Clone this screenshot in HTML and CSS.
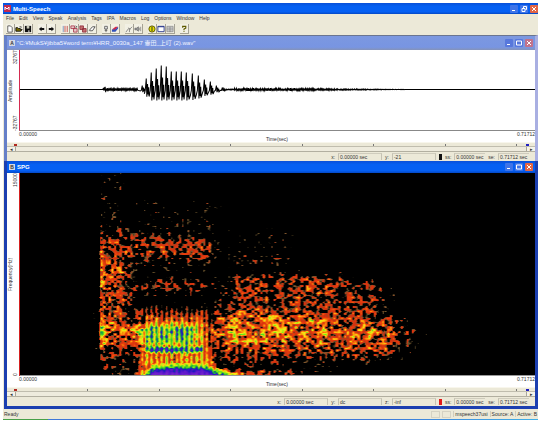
FILE: index.html
```html
<!DOCTYPE html>
<html lang="en">
<head>
<meta charset="utf-8">
<title>Multi-Speech</title>
<link rel="stylesheet" href="styles.css">
</head>
<body>
<div class="app">
  <header class="titlebar main-title">
    <svg class="app-icon" viewBox="0 0 7 7"><rect width="7" height="7" fill="#c22a50"/><path d="M1 5V2l2 2 2-2v3" fill="none" stroke="#fff"/></svg>
    <h1 class="title">Multi-Speech</h1>
    <div class="win-buttons">
      <button aria-label="Minimize"><svg viewBox="0 0 8 8"><path d="M2 5.500h3" /></svg></button>
      <button aria-label="Restore"><svg viewBox="0 0 8 8"><path d="M2 3.500h3v3H2zM3.500 3V1.500h3v3H5.500"/></svg></button>
      <button class="close" aria-label="Close"><svg viewBox="0 0 8 8"><path d="M2 2l4 4M6 2L2 6"/></svg></button>
    </div>
  </header>
  <nav class="menu">
    <a href="#">File</a><a href="#">Edit</a><a href="#">View</a><a href="#">Speak</a><a href="#">Analysis</a><a href="#">Tags</a><a href="#">IPA</a><a href="#">Macros</a><a href="#">Log</a><a href="#">Options</a><a href="#">Window</a><a href="#">Help</a>
  </nav>
  <div class="toolbar">
    <div class="group">
      <button aria-label="New"><svg viewBox="0 0 9 9"><path d="M2 1h3l2 2v5H2z" fill="#fff" stroke="#333" stroke-width=".8"/></svg></button>
      <button aria-label="Open"><svg viewBox="0 0 9 9"><path d="M1 7V3h2l1 1h2v1h2L6.500 7z" fill="#776b00" stroke="#111"/><path d="M5 2h2v1" fill="none" stroke="#111" stroke-width=".7"/></svg></button>
      <button aria-label="Save"><svg viewBox="0 0 9 9"><path d="M1 1h7v7H1z" fill="#111"/><path d="M3 1h3v3H3z" fill="#c8c8b8"/><path d="M5 6h1v2H5z" fill="#fff"/></svg></button>
    </div>
    <div class="group">
      <button aria-label="Back"><svg viewBox="0 0 9 9"><path d="M1 4.500L4 2v1.500h3v2H4V7z" fill="#111"/></svg></button>
      <button aria-label="Forward"><svg viewBox="0 0 9 9"><path d="M8 4.500L5 2v1.500H2v2h3V7z" fill="#111"/></svg></button>
    </div>
    <div class="group">
      <button aria-label="Tile"><svg viewBox="0 0 9 9"><path d="M2.500 1v7" stroke="#7892c0"/><path d="M4.500 1v7M7 1v7" stroke="#c44b48"/></svg></button>
      <button aria-label="Copy window"><svg viewBox="0 0 9 9"><path d="M1 1h4v3H1zM4 4h4v4H4z" fill="#e8c8c8" stroke="#a33044" stroke-width=".9"/><path d="M6 1l2 1-2 1" fill="none" stroke="#333" stroke-width=".7"/></svg></button>
      <button aria-label="Link windows"><svg viewBox="0 0 9 9"><path d="M1 1h4v4H1zM4 4h4v4H4z" fill="#c47070" stroke="#8b2634" stroke-width=".9"/></svg></button>
      <button aria-label="Clear"><svg viewBox="0 0 9 9"><path d="M1.500 6L5 2h3L5 6.500H2z" fill="#fff" stroke="#222" stroke-width=".8"/></svg></button>
    </div>
    <div class="group">
      <button aria-label="Record"><svg viewBox="0 0 9 9"><path d="M3 1.500h3v3H3zM4.500 4.500V8M3 6h3" fill="#eee" stroke="#444" stroke-width=".8"/></svg></button>
      <button aria-label="Erase"><svg viewBox="0 0 9 9"><path d="M1 5l4-3h3L5 6z" fill="#d12d4b"/><path d="M1 5h4l3-3v2L5 7.500H1z" fill="#3050b8"/></svg></button>
    </div>
    <div class="group">
      <button aria-label="Pencil"><svg viewBox="0 0 9 9"><path d="M1 8l3-4 1 1 3-3M4 3l2 2M5 5v3" fill="none" stroke="#666" stroke-width=".8"/></svg></button>
      <button aria-label="Play"><svg viewBox="0 0 9 9"><path d="M1 3.500h2L5 2v5L3 5.500H1zM6 3v3M7.500 2v5" fill="#999" stroke="#666" stroke-width=".7"/></svg></button>
    </div>
    <div class="group">
      <button aria-label="Information"><svg viewBox="0 0 9 9"><circle cx="4.500" cy="4.500" r="3.500" fill="#e5df00" stroke="#555000"/><path d="M4.500 2v5" stroke="#222"/></svg></button>
      <button aria-label="View"><svg viewBox="0 0 9 9"><path d="M1 1.500h7v6H1z" fill="#fff" stroke="#26358a"/><path d="M1 2h7" stroke="#26358a"/></svg></button>
      <button aria-label="Grid"><svg viewBox="0 0 9 9"><path d="M1 1.500h7v6H1zM1 3.500h7M1 5.500h7M4.500 2v6" fill="#ddd" stroke="#777" stroke-width=".7"/></svg></button>
    </div>
    <div class="group">
      <button aria-label="Help"><svg viewBox="0 0 9 9"><path d="M3 3V1.500h3.500v2l-2 1V6M4.500 7v1" fill="none" stroke="#5e5a00" stroke-width="1.300"/></svg></button>
    </div>
  </div>

  <main class="workspace">
    <section class="child inactive">
      <header class="titlebar">
        <span class="tag">A</span>
        <h2 class="title path">"C:¥MukS¥jibba5¥word term¥HRR_0030a_147 壷田_上叮 (2).wav"</h2>
        <div class="win-buttons">
          <button aria-label="Minimize"><svg viewBox="0 0 8 8"><path d="M2 5.500h3"/></svg></button>
          <button aria-label="Maximize"><svg viewBox="0 0 8 8"><path d="M1.500 2h5v4h-5z"/></svg></button>
          <button class="close" aria-label="Close"><svg viewBox="0 0 8 8"><path d="M2 2l4 4M6 2L2 6"/></svg></button>
        </div>
      </header>
      <div class="chart">
        <div class="axis-name">Amplitude</div>
        <div class="scale"><span>32767</span><span>-32767</span></div>
        <svg class="wave" viewBox="0 0 514 80" preserveAspectRatio="none"><path id="wave"/></svg>
        <div class="time"><span>0.00000</span><span class="unit">Time(sec)</span><span>0.71712</span></div>
      </div>
      <div class="ruler"><div class="ticks"><i class="start"></i><i></i><i></i><i></i><i></i><i></i><i></i><i></i></div><i class="end"></i></div>
      <div class="scroll"><button aria-label="Scroll left">◂</button><span class="thumb"></span><button aria-label="Scroll right">▸</button></div>
      <div class="readout">
        <span>x:</span><output class="wide">0.00000 sec</output><span>y:</span><output class="wide">-21</output>
        <b class="marker"></b><span>ss:</span><output>0.00000 sec</output><span>se:</span><output>0.71712 sec</output>
      </div>
    </section>

    <section class="child active">
      <header class="titlebar">
        <span class="tag">B</span>
        <h2 class="title">SPG</h2>
        <div class="win-buttons">
          <button aria-label="Minimize"><svg viewBox="0 0 8 8"><path d="M2 5.500h3"/></svg></button>
          <button aria-label="Maximize"><svg viewBox="0 0 8 8"><path d="M1.500 2h5v4h-5z"/></svg></button>
          <button class="close" aria-label="Close"><svg viewBox="0 0 8 8"><path d="M2 2l4 4M6 2L2 6"/></svg></button>
        </div>
      </header>
      <div class="chart">
        <div class="axis-name">Frequency(Hz)</div>
        <div class="scale"><span>15000</span><span>0</span></div>
        <canvas id="spg" class="spectrogram" width="514" height="203"></canvas>
        <div class="time"><span>0.00000</span><span class="unit">Time(sec)</span><span>0.71712</span></div>
      </div>
      <div class="ruler"><div class="ticks"><i class="start"></i><i></i><i></i><i></i><i></i><i></i><i></i><i></i></div><i class="end"></i></div>
      <div class="scroll"><button aria-label="Scroll left">◂</button><span class="thumb"></span><button aria-label="Scroll right">▸</button></div>
      <div class="readout">
        <span>x:</span><output class="wide">0.00000 sec</output><span>y:</span><output class="wide">dc</output><span>z:</span><output class="wide">-inf</output>
        <b class="marker red"></b><span>ss:</span><output>0.00000 sec</output><span>se:</span><output>0.71712 sec</output>
      </div>
    </section>
  </main>

  <footer class="statusbar"><span class="ready">Ready</span><span class="cell"></span><span class="cell"></span><span>mspeech37usi</span><span>Source: A</span><span>Active: B</span></footer>
  <div class="taskbar"></div>
</div>
<script src="script.js"></script>
</body>
</html>
```
FILE: styles.css
```css
* { box-sizing: border-box; }
body { margin: 0; background: #fff; color: #333; font: 5px/6px "Liberation Sans", "Noto Sans CJK JP", sans-serif; }
.app { margin: 3px 1px 0 3px; background: #ece9d8; }
h1, h2 { margin: 0; }
button { padding: 0; border: 0; font: inherit; }
svg, canvas { display: block; }

.titlebar { display: flex; align-items: center; gap: 2px; height: 12px; padding: 0 2px; background: linear-gradient(#0a50d8, #0560f2 30%, #0560f4 80%, #0548c4); color: #fff; }
.main-title { height: 11px; padding: 0 0 0 1px; }
.app-icon { width: 7px; height: 7px; }
.title { flex: 1; font-size: 6px; line-height: 8px; font-weight: bold; white-space: nowrap; }
.path { font-weight: normal; }
.win-buttons { display: flex; gap: 2px; }
.win-buttons button { width: 8px; height: 8px; border-radius: 1px; background: #3f74e8; }
.win-buttons .close { background: #e26545; }
.win-buttons path { fill: none; stroke: #fff; stroke-width: 1; }

.menu { display: flex; gap: 5px; height: 9px; padding: 1px 3px; }
.menu a { color: #333; text-decoration: none; }
.toolbar { display: flex; gap: 5px; height: 12px; padding: 1px 3px; }
.group { display: flex; }
.toolbar button { width: 9px; height: 10px; background: #f2f0e4; border-right: 1px solid #a5a294; border-bottom: 1px solid #a5a294; }
.toolbar svg { width: 8px; height: 8px; }

.workspace { padding-left: 1px; }
.child { border: solid #1c3fb0; border-width: 0 3px 3px; background: #ece9d8; }
.inactive { border: solid #a9afe2; border-width: 1px 3px 0; border-top-color: #6a7590; border-left-color: #6680c8; }
.inactive .titlebar { height: 14px; background: linear-gradient(#7c98e0, #7895e2 80%, #8593b8); color: #f0f4ff; }
.inactive .win-buttons button { background: #5878dc; }
.inactive .win-buttons .close { background: #c2728a; }
.tag { width: 6px; height: 6px; background: #d5d8e4; color: #333; text-align: center; font-weight: bold; }

.chart { display: grid; grid-template-columns: 5px 7px 1fr; background: #fff; }
.axis-name, .scale { writing-mode: vertical-rl; transform: rotate(180deg); line-height: 6px; }
.axis-name { text-align: center; }
.scale { display: flex; flex-direction: row-reverse; justify-content: space-between; }
.wave { width: 100%; height: 81px; border-left: 1px solid #d42a50; border-bottom: 1px solid #888; }
.wave path { fill: none; stroke: #000; stroke-width: 1; }
.spectrogram { width: 100%; height: 203px; background: #000; border-left: 1px solid #d42020; }
.time { grid-column: 3; display: grid; grid-template-columns: 1fr auto 1fr; height: 11px; }
.time :last-child { text-align: right; }
.time .unit { padding-top: 5px; }

.ruler { display: flex; gap: 9px; height: 5px; padding: 1px 6px 0 7px; border-top: 1px solid #f8f6ec; border-bottom: 1px solid #c0bdae; }
.ticks { flex: 1; display: flex; justify-content: space-between; }
.ruler i { width: 1px; height: 2px; background: #777; }
.ruler .start { width: 3px; background: #b02820; }
.ruler .end { width: 3px; background: #2020c0; }
.scroll { display: flex; height: 5px; border-bottom: 1px solid #b2afa0; }
.scroll button { width: 8px; background: #f5f3e9; line-height: 4px; overflow: hidden; color: #333; }
.scroll .thumb { flex: 1; border: solid #aaa798; border-width: 0 1px; background: #eeebdd; }
.readout { display: flex; justify-content: flex-end; align-items: center; gap: 3px; height: 9px; padding-right: 6px; }
.readout output { min-width: 31px; border-left: 1px solid #c5c2b3; border-top: 1px solid #cfccbd; padding-left: 1px; }
.readout .wide { width: 44px; border-right: 1px solid #c5c2b3; }
.marker { width: 3px; height: 6px; background: #111; }
.marker.red { background: #e01818; }

.statusbar { display: flex; align-items: center; gap: 2px; height: 10px; padding: 1px; }
.statusbar span { border-left: 1px solid #cfccbd; padding-left: 1px; }
.statusbar .ready { flex: 1; border: 0; padding: 0; }
.statusbar .cell { width: 9px; height: 7px; border: 1px solid #d5d2c3; }
.taskbar { height: 1px; background: linear-gradient(90deg, #48a048 45px, #3f78d8 45px, #3f78d8 70%, #40b0e8); }
```
FILE: script.js
```js
// Repeatable random numbers, so that the plots look the same on each load.
function rand(x, y) {
  let h = Math.imul(x, 374761393) + Math.imul(y, 668265263);
  h = Math.imul(h ^ (h >>> 13), 1274126177);
  return ((h ^ (h >>> 16)) >>> 0) / 4294967295;
}
function smooth(t) { return t * t * (3 - 2 * t); }
function noise(x, y) {
  const i = Math.floor(x), j = Math.floor(y), u = smooth(x - i), v = smooth(y - j);
  const a = rand(i, j) * (1 - u) + rand(i + 1, j) * u;
  const b = rand(i, j + 1) * (1 - u) + rand(i + 1, j + 1) * u;
  return a * (1 - v) + b * v;
}

// Waveform: quiet line, plosive burst, glottal pulses, then decaying friction.
const peaks = [[122, 4], [126, 11], [131, 17], [136, 21], [141, 24], [146, 23], [151, 18], [156, 18], [161, 18], [166, 17], [172, 16], [178, 14], [184, 10], [190, 8], [196, 4], [202, 2]];
const mid = 39.5;
let d = 'M0 ' + mid + 'L83 ' + mid;
for (let x = 83; x < 118; x += 0.5) {
  const a = x < 86 ? 3 : 1.3;
  d += 'L' + x + ' ' + (mid + (x * 2 % 2 ? 1 : -1) * (0.3 + rand(x * 2, 5) * 0.7) * a).toFixed(1);
}
peaks.forEach(([x, h]) => {
  const low = Math.min(h * 0.65, 11);
  d += `L${x - 2} ${mid + low * 0.6}L${x - 1} ${mid + 1}L${x} ${mid - h}L${x + 0.6} ${mid + low}L${x + 1.3} ${mid - h * 0.5}L${x + 1.8} ${mid + low * 0.7}L${x + 2.4} ${mid - h * 0.2}L${x + 2.7} ${mid + low * 0.9}`;
});
for (let x = 206; x < 390; x += 0.5) {
  const a = x < 214 ? 0.6 : 1.4 * (1 - Math.max(0, x - 270) / 125);
  d += 'L' + x + ' ' + (mid + (x * 2 % 2 ? 1 : -1) * (0.1 + rand(x * 2, 9) * 0.9) * a).toFixed(1);
}
document.getElementById('wave').setAttribute('d', d + 'L390 ' + mid + 'L514 ' + mid);

// Energy zones: left, right, top, bottom, level, fade per pixel sideways, fade per pixel up and down.
const zones = [
  [80, 100, 5, 60, 0.30, 0.03, 0.01],
  [80, 100, 65, 180, 0.50, 0.02, 0.01],
  [80, 102, 90, 172, 0.58, 0.02, 0.02],
  [80, 83, 70, 172, 0.68, 0.05, 0.02],
  [80, 104, 150, 156, 0.70, 0.02, 0.025],
  [80, 82, 152, 168, 0.88, 0.06, 0.03],
  [98, 125, 140, 176, 0.50, 0.01, 0.02],
  [116, 196, 30, 72, 0.28, 0.02, 0.02],
  [100, 188, 74, 78, 0.54, 0.02, 0.014],
  [110, 192, 111, 114, 0.44, 0.02, 0.02],
  [126, 186, 144, 200, 0.64, 0.06, 0.025],
  [126, 182, 153, 172, 0.84, 0.07, 0.03],
  [129, 168, 156, 168, 1.04, 0.02, 0.04],
  [128, 178, 175, 177, 1.16, 0.05, 0.10],
  [122, 188, 180, 202, 0.78, 0.05, 0.03],
  [188, 215, 160, 176, 0.49, 0.01, 0.02],
  [208, 270, 56, 90, 0.28, 0.03, 0.02],
  [214, 265, 82, 90, 0.36, 0.02, 0.04],
  [216, 320, 106, 178, 0.54, 0.018, 0.035],
  [214, 352, 112, 178, 0.51, 0.012, 0.03],
  [206, 358, 148, 176, 0.61, 0.009, 0.022],
  [209, 300, 146, 168, 0.70, 0.012, 0.015],
  [210, 355, 159, 161, 0.76, 0.01, 0.025],
  [216, 364, 146, 176, 0.49, 0.011, 0.03],
  [190, 240, 198, 203, 0.63, 0.006, 0.07],
  [80, 105, 180, 203, 0.32, 0.02, 0.02]
];
const stops = [[0.50, [0, 0, 0]], [0.55, [115, 90, 48]], [0.60, [206, 48, 16]], [0.73, [232, 62, 12]], [0.81, [255, 150, 10]], [0.91, [246, 236, 20]], [1.01, [105, 230, 25]], [1.11, [20, 165, 70]], [1.20, [25, 25, 190]], [1.36, [90, 20, 205]], [1.6, [120, 40, 200]]];
function colour(e) {
  if (e <= stops[0][0]) return [0, 0, 0];
  for (let i = 1; i < stops.length; i++) {
    if (e < stops[i][0]) {
      const [e0, a] = stops[i - 1], [e1, b] = stops[i], t = (e - e0) / (e1 - e0);
      return a.map((c, k) => c + (b[k] - c) * t);
    }
  }
  return stops[stops.length - 1][1];
}
const canvas = document.getElementById('spg');
const ctx = canvas.getContext('2d');
const image = ctx.createImageData(514, 203);
for (let y = 0; y < 203; y++) {
  for (let x = 0; x < 514; x++) {
    let base = 0;
    for (const [l, r, t, b, level, fx, fy] of zones) {
      const dx = Math.max(l - x, 0) * (l === 80 ? 0.3 : fx) + Math.max(x - r, 0) * fx;
      const dy = Math.max(t - y, y - b, 0) * fy;
      base = Math.max(base, level - dx - dy);
    }
    let e = base + (noise(x / 2.7, y / 2.3) - 0.5) * 0.62 + (noise(x / 1.5 + 90, y / 1.5) - 0.5) * 0.12;
    const pulse = Math.cos((x - 126) / 5 * Math.PI * 2);
    if (x > 122 && x < 192 && y > 130) {
      e = base + (e - base) * 0.5 + pulse * 0.13;
    }
    // Voicing bar at the bottom of the plot.
    const top = x < 182 ? 189 + Math.max(0, 134 - x) * 0.9 : 189 + (x - 182) * 0.36;
    if (x > 117 && x < 222 && y > top) {
      const rise = 0.8 + (y - top) * 0.06;
      e = Math.max(e, rise + (noise(x / 2, y / 2) - 0.5) * 0.3 + pulse * 0.05);
    }
    image.data.set([...colour(base > 0 ? e : 0), 255], (y * 514 + x) * 4);
  }
}
ctx.putImageData(image, 0, 0);
ctx.fillStyle = '#999';
ctx.fillRect(0, 202, 514, 1);
```
